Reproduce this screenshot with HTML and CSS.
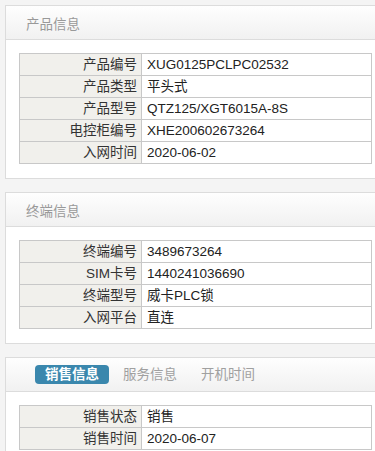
FILE: index.html
```html
<!DOCTYPE html>
<html lang="zh-CN">
<head>
  <meta charset="UTF-8" />
  <meta name="viewport" content="width=device-width, initial-scale=1.0"/>
  <title>设备详情</title>
  <link rel="stylesheet" href="styles.css">
</head>
<body>
  <div class="panel">
    <div class="panel-head">
      <span class="panel-title">产品信息</span>
    </div>
    <div class="panel-body">
      <table class="info">
        <tr><th>产品编号</th><td>XUG0125PCLPC02532</td></tr>
        <tr><th>产品类型</th><td>平头式</td></tr>
        <tr><th>产品型号</th><td>QTZ125/XGT6015A-8S</td></tr>
        <tr><th>电控柜编号</th><td>XHE200602673264</td></tr>
        <tr><th>入网时间</th><td>2020-06-02</td></tr>
      </table>
    </div>
  </div>

  <div class="panel">
    <div class="panel-head">
      <span class="panel-title">终端信息</span>
    </div>
    <div class="panel-body">
      <table class="info">
        <tr><th>终端编号</th><td>3489673264</td></tr>
        <tr><th>SIM卡号</th><td>1440241036690</td></tr>
        <tr><th>终端型号</th><td>威卡PLC锁</td></tr>
        <tr><th>入网平台</th><td>直连</td></tr>
      </table>
    </div>
  </div>

  <div class="panel">
    <div class="panel-head tabs">
      <span class="tab active">销售信息</span>
      <span class="tab">服务信息</span>
      <span class="tab">开机时间</span>
    </div>
    <div class="panel-body">
      <table class="info">
        <tr><th>销售状态</th><td>销售</td></tr>
        <tr><th>销售时间</th><td>2020-06-07</td></tr>
      </table>
    </div>
  </div>
</body>
</html>
```

FILE: styles.css
```css
html, body {
  margin: 0;
  overflow: hidden;
}

body {
  background: #f4f4f4;
  color: #222;
  font-family: "Liberation Sans", "Noto Sans CJK SC", sans-serif;
  font-size: 13px;
  padding: 5px 0 0 5px;
}

.panel {
  width: 379px;
  background: #fff;
  border: 1px solid #dcdcdc;
  margin-bottom: 13px;
}

.panel-head {
  height: 33px;
  display: flex;
  align-items: center;
  padding-left: 20px;
  background: linear-gradient(to bottom, #fefefe, #f1f1f1);
  border-bottom: 1px solid #dcdcdc;
}

.panel-title {
  color: #999;
  font-size: 13.5px;
}

.panel-body {
  padding: 13px 13px 14px;
}

.info {
  width: 353px;
  border-collapse: collapse;
  table-layout: fixed;
}

.info th,
.info td {
  height: 21px;
  padding: 0 5px;
  border: 1px solid #c8c8c8;
  font-size: 13.5px;
  line-height: 21px;
  white-space: nowrap;
}

.info th {
  width: 112px;
  background: #f1f0ec;
  color: #333;
  font-weight: normal;
  text-align: right;
  padding-right: 4px;
}

.info td {
  color: #222;
}

/* tabs in the third panel header */

.tabs {
  padding-left: 29px;
  gap: 4px;
}

.tab {
  height: 19px;
  line-height: 19px;
  padding: 0 10px;
  border-radius: 4px;
  color: #a0a0a0;
  font-size: 13.5px;
}

.tab.active {
  background: #3a87ad;
  color: #fff;
  font-weight: bold;
}
```
